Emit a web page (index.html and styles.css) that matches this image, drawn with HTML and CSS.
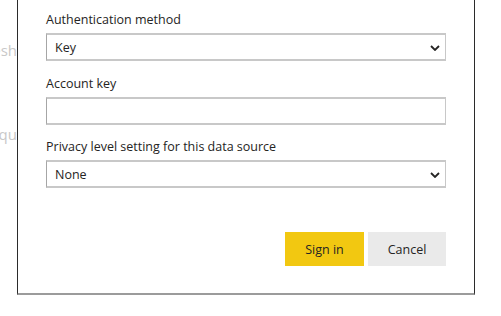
FILE: index.html
```html
<!DOCTYPE html>
<html lang="en">
<head>
  <meta charset="UTF-8" />
  <meta name="viewport" content="width=device-width, initial-scale=1.0" />
  <title>Sign in to data source</title>
  <link rel="stylesheet" href="styles.css">
</head>
<body>
  <div class="page">
    <div class="backdrop">
      <span class="ghost ghost-top">Scheduled refresh</span>
      <span class="ghost ghost-low">Refresh frequ</span>
    </div>
    <div class="dialog">
      <div class="field">
        <label for="authMethod">Authentication method</label>
        <div class="select-wrap">
          <select id="authMethod">
            <option>Key</option>
            <option>Shared Access Signature (SAS)</option>
          </select>
          <svg class="chevron" viewBox="0 0 10 6" width="10" height="6"><path d="M1 1l4 4 4-4" fill="none" stroke="#252423" stroke-width="1.8"/></svg>
        </div>
      </div>
      <div class="field">
        <label for="accountKey">Account key</label>
        <input type="password" id="accountKey" />
      </div>
      <div class="field">
        <label for="privacy">Privacy level setting for this data source</label>
        <div class="select-wrap">
          <select id="privacy">
            <option>None</option>
            <option>Private</option>
            <option>Organizational</option>
            <option>Public</option>
          </select>
          <svg class="chevron" viewBox="0 0 10 6" width="10" height="6"><path d="M1 1l4 4 4-4" fill="none" stroke="#252423" stroke-width="1.8"/></svg>
        </div>
      </div>
      <div class="actions">
        <button class="btn btn-primary">Sign in</button>
        <button class="btn btn-secondary">Cancel</button>
      </div>
    </div>
  </div>
</body>
</html>
```

FILE: styles.css
```css
* {
  box-sizing: border-box;
  margin: 0;
  padding: 0;
}
body {
  font-family: 'Open Sans', 'Noto Sans', sans-serif;
  background: #fff;
  color: #252423;
  font-size: 12.5px;
}
.page {
  display: flex;
  align-items: flex-start;
}
.backdrop {
  width: 17px;
  overflow: hidden;
  display: flex;
  flex-direction: column;
  align-items: flex-end;
  color: #c8c8c8;
  font-size: 15px;
  white-space: nowrap;
}
.ghost-top {
  margin-top: 40px;
}
.ghost-low {
  margin-top: 64px;
}
.dialog {
  width: 458px;
  height: 295px;
  border-left: 1px solid #2b2b2b;
  border-right: 1px solid #2b2b2b;
  border-bottom: 2px solid #9b9b9b;
  padding: 11px 28px 0;
  background: #fff;
}
.field {
  display: flex;
  flex-direction: column;
  margin-bottom: 13px;
}
.field:first-child {
  margin-bottom: 14px;
}
.field label {
  line-height: 18px;
  margin-bottom: 4px;
}
.select-wrap {
  position: relative;
}
select, input {
  width: 100%;
  height: 28px;
  font: inherit;
  color: #252423;
  background: #fff;
  border: 1px solid #c8c8c8;
  border-top-width: 2px;
  border-bottom-width: 2px;
  border-left-color: #a6a6a6;
  border-radius: 0;
  padding: 0 8px;
  outline: none;
  appearance: none;
}
.chevron {
  position: absolute;
  right: 6px;
  top: 12px;
  pointer-events: none;
}
.actions {
  display: flex;
  justify-content: flex-end;
  gap: 4px;
  margin-top: 44px;
}
.btn {
  height: 34px;
  border: none;
  font: inherit;
  color: #252423;
  cursor: pointer;
}
.btn-primary {
  width: 79px;
  background: #f2c811;
}
.btn-secondary {
  width: 78px;
  background: #eaeaea;
}
```
